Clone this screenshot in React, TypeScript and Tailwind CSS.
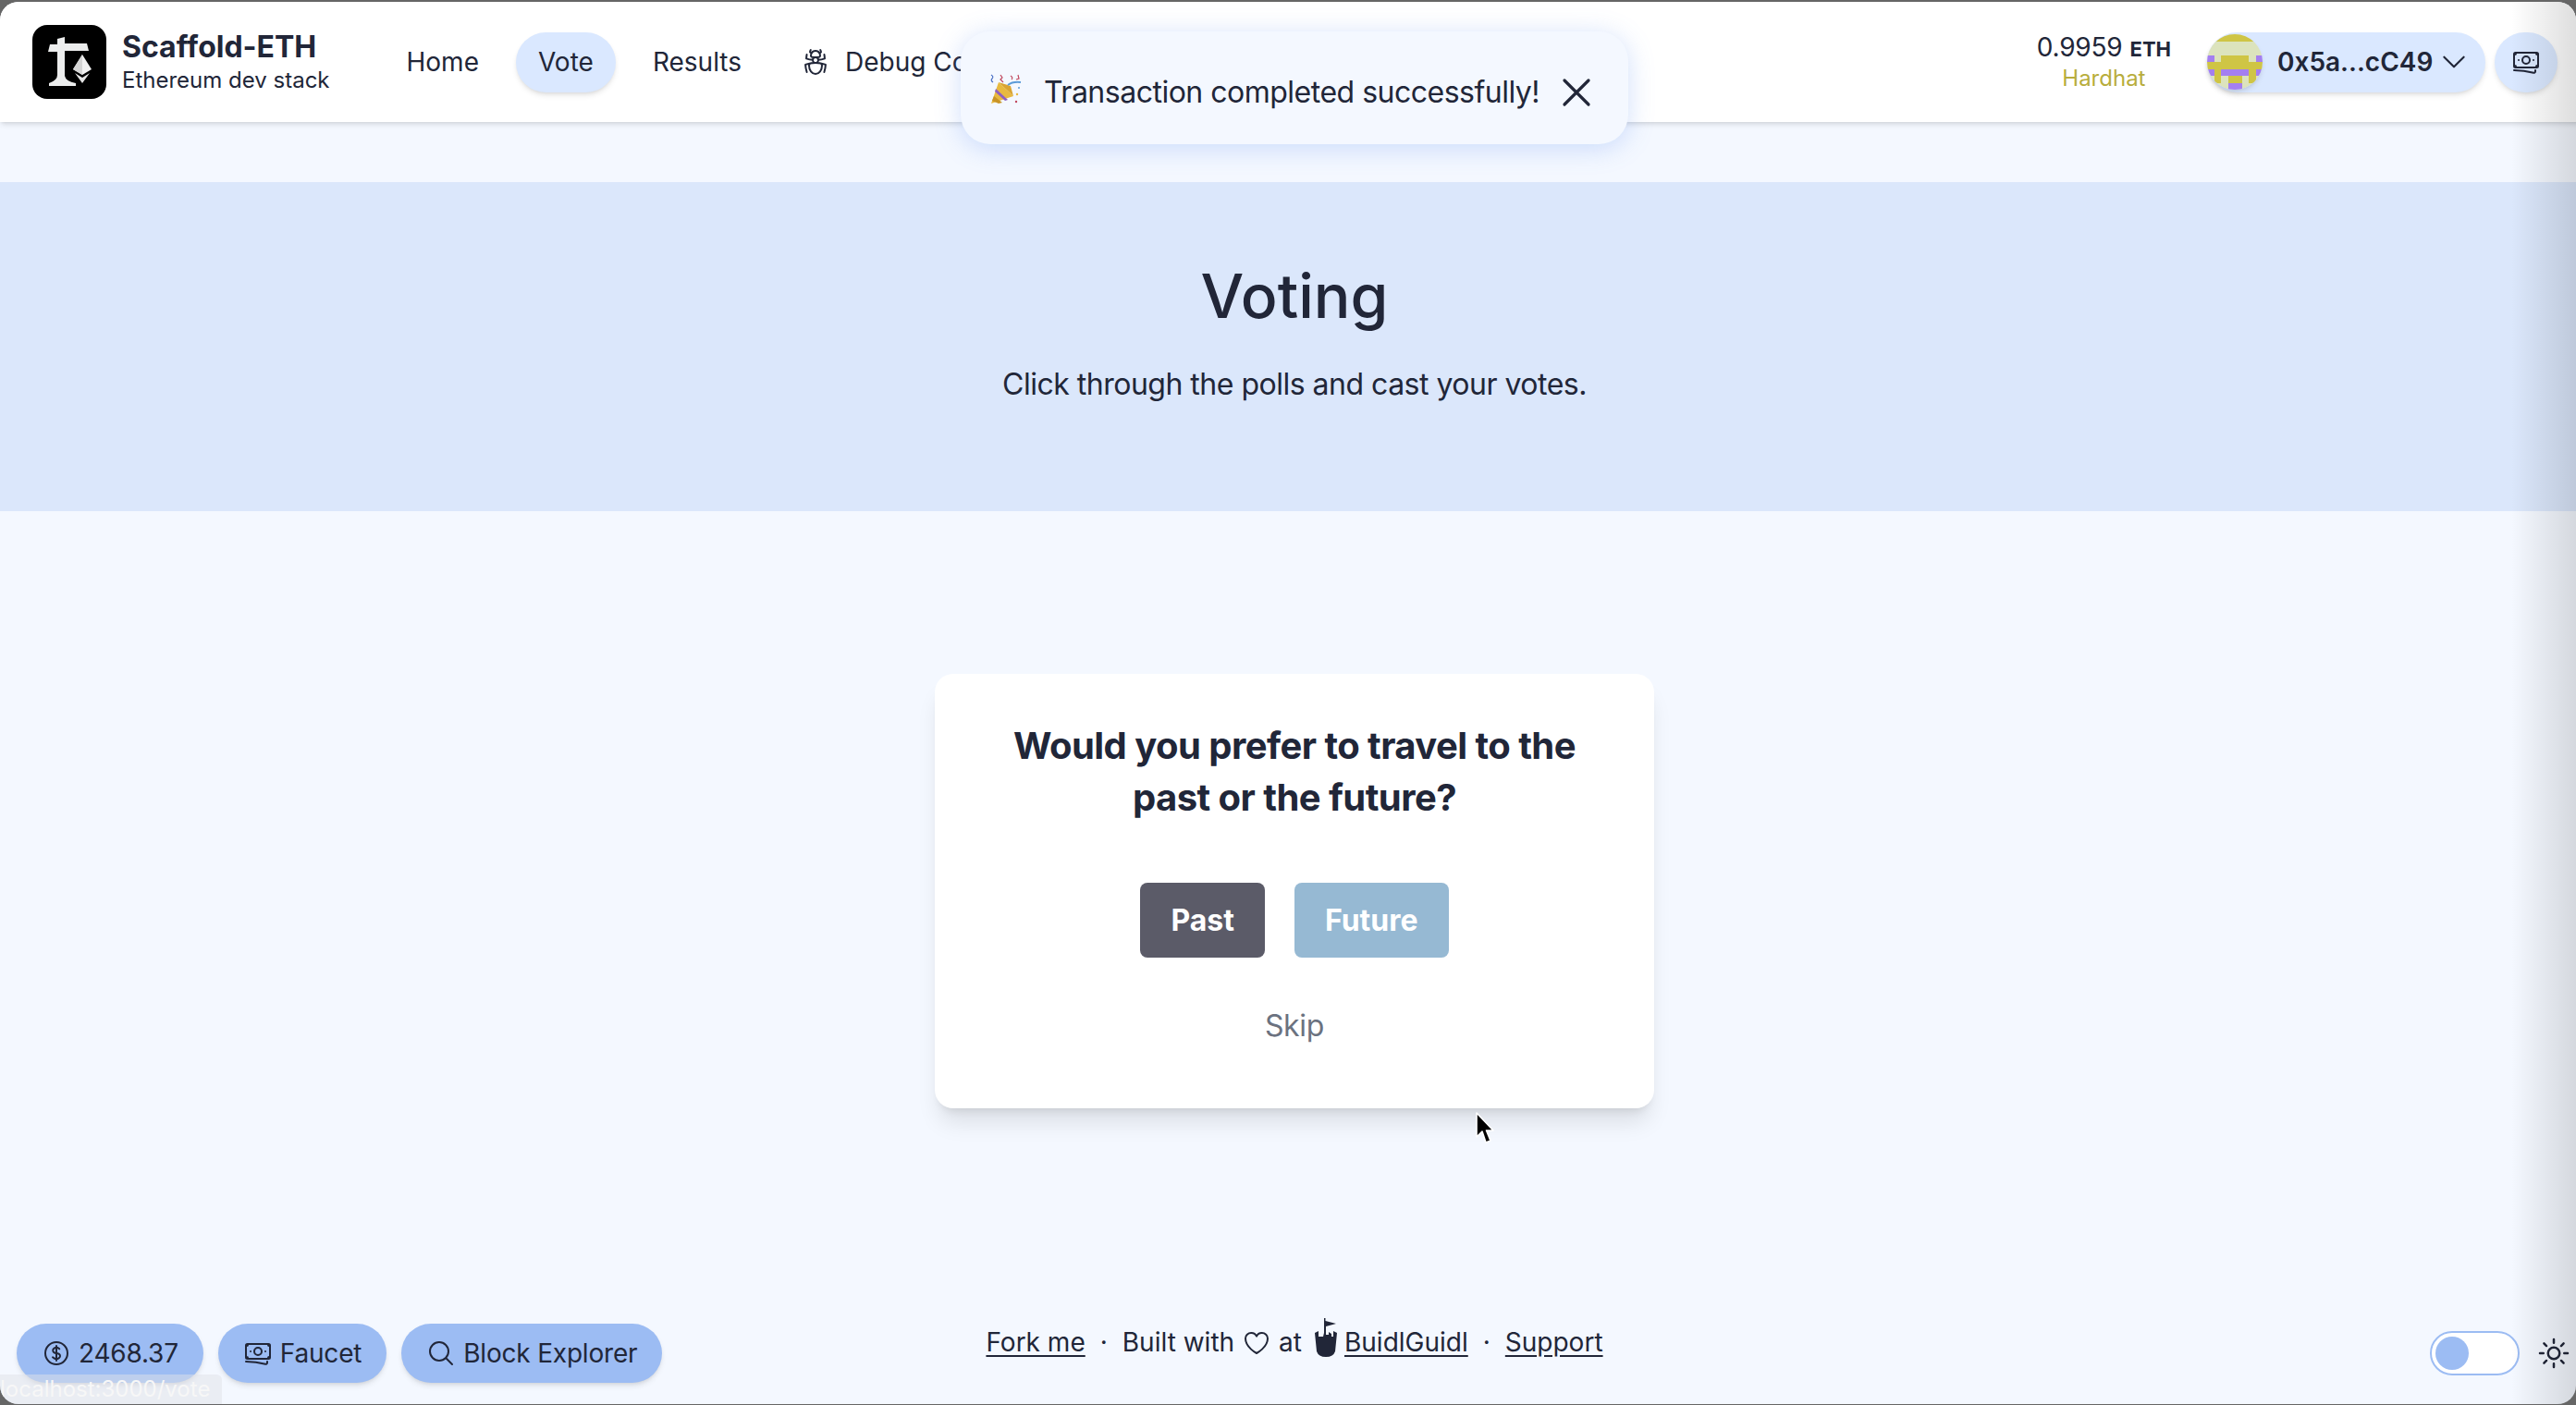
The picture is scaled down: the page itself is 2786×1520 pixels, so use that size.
import React from "react";
import {
  HiOutlineBugAnt,
  HiOutlineBanknotes,
  HiOutlineCurrencyDollar,
  HiOutlineMagnifyingGlass,
  HiOutlineHeart,
  HiOutlineChevronDown,
  HiOutlineSun,
  HiOutlineXMark,
} from "react-icons/hi2";

const Logo = () => (
  <svg viewBox="0 0 80 80" className="w-[80px] h-[80px] shrink-0">
    <rect width="80" height="80" rx="16" fill="#000" />
    <path d="M27 15 L35 13 L35 20 L59 20 L61 28 L35 28 L35 55 Q36 61 47 63 L47 66 L18 66 L18 63 Q27 60 27 54 L27 29 L17 29 L19 21 L27 21 Z" fill="#eceded" />
    <path d="M54 32 L64 48 L54 54 L44 48 Z" fill="#f2f2f2" />
    <path d="M54 32 L54 54 L44 48 Z" fill="#d5d5d5" />
    <path d="M46 52 L54 57 L62 52 L54 63 Z" fill="#e4e4e4" />
  </svg>
);

const Blockie = () => {
  const rows = ["YYYYYYYY", "PPPPPPPP", "PPPPPPPP", "VPYYYYPV", "YYYYYYYY", "VYVVVVYV", "PYPYYPYP", "PPPVVPPP"];
  const c: Record<string, string> = { Y: "#cfc545", P: "#dce3bd", V: "#a47ff0" };
  return (
    <svg viewBox="0 0 8 8" className="w-[60px] h-[60px] rounded-full shrink-0 shadow-md" shapeRendering="crispEdges">
      {rows.map((r, y) => r.split("").map((k, x) => <rect key={`${x}-${y}`} x={x} y={y} width="1.02" height="1.02" fill={c[k]} />))}
    </svg>
  );
};

const Popper = () => (
  <svg viewBox="0 0 34 34" className="w-[34px] h-[34px] shrink-0">
    <path d="M1 32 L9 9 L25 24 Z" fill="#e8b93f" />
    <path d="M4 24 L13 31 L9 32 L2 29 Z" fill="#c99426" />
    <path d="M6 16 L19 28 L16 29 L5 19 Z" fill="#8e5fc0" />
    <path d="M9 9 L25 24 L22 13 Z" fill="#d9a432" />
    <path d="M19 12 Q24 8 33 9" stroke="#5b9bd8" strokeWidth="2" fill="none" />
    <path d="M1 1 Q4 3 2 5 Q0 7 3 9" stroke="#4a6fc4" strokeWidth="1.2" fill="none" />
    <path d="M11 1 L13 4 L11 6 L14 9" stroke="#c0485e" strokeWidth="1.2" fill="none" />
    <path d="M22 2 Q25 4 23 6 M30 1 L31 5 L28 6" stroke="#c0485e" strokeWidth="1.2" fill="none" />
    <circle cx="29" cy="22" r="1.2" fill="#e8b93f" />
    <circle cx="28" cy="30" r="1.2" fill="#c0485e" />
    <circle cx="31" cy="15" r="1" fill="#5b9bd8" />
  </svg>
);

const Castle = () => (
  <svg viewBox="0 0 24 42" className="w-[24px] h-[42px]">
    <path d="M10 0 L11.5 0 L11.5 3 L23 6 L12 9 L12 18 L15 18 L15 15 L18 17 L18 20 L20 20 L20 14 L24 16 L22 36 Q20 42 12 42 Q4 42 2 36 L0 16 L4 14 L4 20 L9 20 L10 16 Z" fill="#212638" />
  </svg>
);

const Chip = ({ icon, label }: { icon: React.ReactNode; label: string }) => (
  <div className="h-[64px] px-[27px] rounded-full bg-[#9cbcf3] shadow-md flex items-center gap-[8px] text-[28px] tracking-[-0.2px] text-[#212638]">
    {icon}
    <span>{label}</span>
  </div>
);

export default function App() {
  return (
    <div className="w-[2786px] h-[1520px] bg-[#666666] pt-[2px] pb-[1px] overflow-hidden" style={{ fontFamily: "Inter, 'Liberation Sans', sans-serif" }}>
      <div className="relative h-full overflow-hidden rounded-[20px] bg-[#f4f8ff] text-[#212638]">
        <div className="relative w-[2800px] h-full flex flex-col">
          <header className="relative h-[130px] bg-white shadow-md shrink-0 flex items-center pl-[35px] pr-[34px] z-10">
            <div className="flex items-center gap-[17px]">
              <Logo />
              <div className="flex flex-col">
                <span className="text-[32px] leading-[40px] font-bold">Scaffold-ETH</span>
                <span className="text-[24px] leading-[32px]">Ethereum dev stack</span>
              </div>
            </div>
            <nav className="ml-[59px] flex items-center gap-[16px] text-[28px]">
              <a className="h-[65px] px-[24px] flex items-center rounded-full">Home</a>
              <a className="h-[65px] px-[24px] flex items-center rounded-full bg-[#dae8ff] shadow-md">Vote</a>
              <a className="h-[65px] px-[24px] flex items-center rounded-full">Results</a>
              <a className="h-[65px] px-[24px] flex items-center rounded-full gap-[16px]">
                <HiOutlineBugAnt className="w-[32px] h-[32px]" />
                Debug Contracts
              </a>
            </nav>
            <div className="ml-auto flex items-center">
              <div className="flex flex-col items-center mr-[39px]">
                <div className="flex items-baseline gap-[8px] leading-[34px]">
                  <span className="text-[28px] tracking-[-0.2px]">0.9959</span>
                  <span className="text-[22px] font-bold">ETH</span>
                </div>
                <span className="text-[24px] leading-[30px] text-[#b8ad3c]">Hardhat</span>
              </div>
              <div className="h-[65px] w-[301px] rounded-full bg-[#dae8ff] shadow-md flex items-center">
                <Blockie />
                <span className="ml-[16px] text-[28px] font-semibold">0x5a...cC49</span>
                <HiOutlineChevronDown className="ml-[6px] w-[34px] h-[34px]" />
              </div>
              <div className="ml-[10px] h-[65px] w-[68px] rounded-full bg-[#dae8ff] shadow-md flex items-center justify-center">
                <HiOutlineBanknotes className="w-[32px] h-[32px]" />
              </div>
            </div>
          </header>

          <main className="flex-1 flex flex-col items-center pt-[65px]">
            <section className="w-full h-[356px] bg-[#dbe7fb] flex flex-col items-center pt-[79px]">
              <h1 className="text-[66px] leading-[88px] font-medium">Voting</h1>
              <p className="mt-[30px] text-[32px] leading-[44px] tracking-[-0.5px]">Click through the polls and cast your votes.</p>
            </section>
            <div className="mt-[176px] w-[778px] h-[470px] bg-white rounded-[20px] shadow-xl flex flex-col items-center pt-[50px] px-[60px]">
              <h2 className="text-[40px] leading-[56px] font-bold text-center tracking-[-0.55px]">Would you prefer to travel to the past or the future?</h2>
              <div className="mt-[64px] flex gap-[32px]">
                <button className="h-[81px] px-[33px] rounded-[8px] bg-[#5b5b68] text-white text-[32px] font-bold">Past</button>
                <button className="h-[81px] px-[33px] rounded-[8px] bg-[#96b9d3] text-white text-[32px] font-bold">Future</button>
              </div>
              <button className="mt-[50px] text-[32px] leading-[48px] text-[#6b7280] tracking-[-0.3px]">Skip</button>
            </div>
          </main>

          <footer className="grid grid-cols-[1fr_auto_1fr] pl-[18px] pr-[18px] pb-[23px]">
            <div className="flex gap-[16px]">
              <Chip icon={<HiOutlineCurrencyDollar className="w-[32px] h-[32px]" />} label="2468.37" />
              <Chip icon={<HiOutlineBanknotes className="w-[32px] h-[32px]" />} label="Faucet" />
              <Chip icon={<HiOutlineMagnifyingGlass className="w-[32px] h-[32px]" />} label="Block Explorer" />
            </div>
            <div className="flex items-center self-start h-[40px] text-[28px] gap-[16px]">
              <a className="underline underline-offset-4">Fork me</a>
              <span>·</span>
              <div className="flex items-center gap-[8px]">
                <span>Built with</span>
                <HiOutlineHeart className="w-[32px] h-[32px] mt-[2px]" />
                <span>at</span>
                <span className="ml-[6px] -mt-[10px]"><Castle /></span>
                <a className="underline underline-offset-4">BuidlGuidl</a>
              </div>
              <span>·</span>
              <a className="underline underline-offset-4">Support</a>
            </div>
            <div className="flex items-center justify-end gap-[17px]">
              <div className="w-[97px] h-[48px] rounded-full bg-white border-2 border-[#9cbcf3] flex items-center pl-[4px]">
                <div className="w-[36px] h-[36px] rounded-full bg-[#9cbcf3]" />
              </div>
              <HiOutlineSun className="w-[40px] h-[40px]" />
            </div>
          </footer>

          <div className="absolute left-[1039px] top-[32px] z-20 w-[722px] h-[122px] rounded-[32px] bg-[#f4f8ff] shadow-[0_4px_28px_rgba(90,140,240,0.28)] flex items-center pl-[32px] pt-[10px]">
            <span className="-mt-[6px]"><Popper /></span>
            <span className="ml-[24px] text-[32px] tracking-[-0.5px]">Transaction completed successfully!</span>
            <HiOutlineXMark className="ml-[14px] w-[52px] h-[52px]" />
          </div>
        </div>

        <div className="absolute inset-y-0 right-0 w-[70px] bg-gradient-to-r from-transparent to-black/[0.13] pointer-events-none z-30" />

        <div className="absolute left-0 bottom-0 w-[240px] h-[32px] bg-[#dfe2e8]/50 rounded-tr-[6px] overflow-hidden z-30 text-[24px] leading-[32px] text-[#f7f7f7] whitespace-nowrap">
          localhost:3000/vote
        </div>

        <svg viewBox="0 0 22 36" className="absolute left-[1595px] top-[1201px] w-[22px] h-[36px] z-30">
          <path d="M2 1 L2 27 L8 21 L12 33 L17 31 L12.5 20 L20 20 Z" fill="#000" stroke="#fff" strokeWidth="1.6" strokeLinejoin="round" />
        </svg>
      </div>
    </div>
  );
}
